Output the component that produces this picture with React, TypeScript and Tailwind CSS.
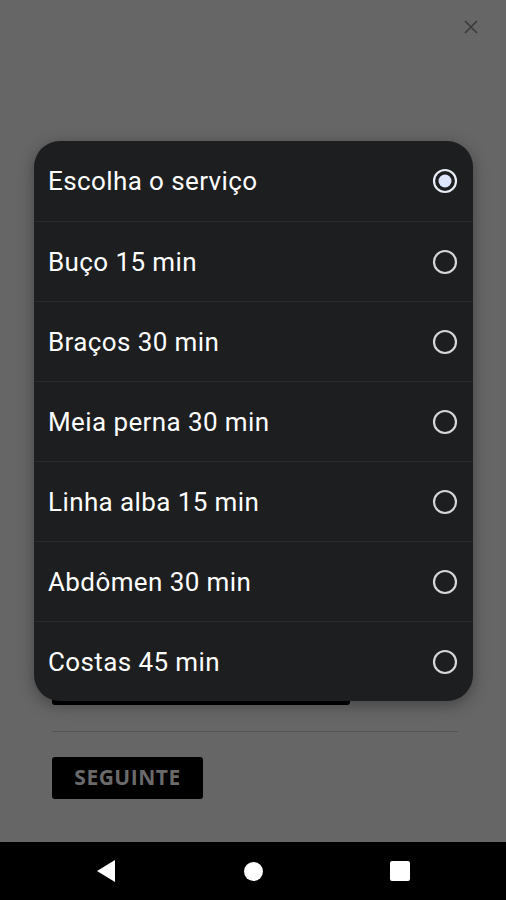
import React from "react";

const items = [
  "Escolha o serviço",
  "Buço 15 min",
  "Braços 30 min",
  "Meia perna 30 min",
  "Linha alba 15 min",
  "Abdômen 30 min",
  "Costas 45 min",
];

function Radio({ checked }: { checked: boolean }) {
  return (
    <svg width="28" height="28" viewBox="0 0 28 28">
      <circle cx="14" cy="14" r="11" fill="none" stroke={checked ? "#e8ecf5" : "#d6d6d6"} strokeWidth="2.2" />
      {checked && <circle cx="14" cy="14" r="6.5" fill="#dce5fb" />}
    </svg>
  );
}

export default function App() {
  return (
    <div className="relative w-[506px] h-[900px] overflow-hidden bg-[#666666]" style={{ fontFamily: "Roboto, 'Liberation Sans', sans-serif" }}>
      <div className="flex flex-col h-[842px]">
        <div className="flex justify-end pt-[19px] pr-[27px]">
          <svg width="16" height="16" viewBox="0 0 16 16">
            <path d="M2 2 L14 14 M14 2 L2 14" stroke="#3a3a3a" strokeWidth="1.6" />
          </svg>
        </div>
        <div className="mt-[654px] ml-[52px] w-[298px] h-[16px] bg-black rounded-b-[3px]" />
        <div className="mt-[26px] ml-[52px] mr-[48px] h-px bg-[#555555]" />
        <div className="mt-[25px] ml-[52px] w-[151px] h-[42px] bg-black rounded-[3px] flex items-center justify-center">
          <span className="text-[21px] font-bold text-[#6a6a6a] tracking-[0.5px]" style={{ fontFamily: "'Open Sans', 'Liberation Sans', sans-serif" }}>SEGUINTE</span>
        </div>
      </div>
      <div className="h-[58px] bg-black flex items-center pl-[86px] gap-[107px]">
        <div className="w-[40px] flex justify-center">
          <svg width="18" height="22" viewBox="0 0 18 22">
            <path d="M0 11 L18 0 L18 22 Z" fill="#ffffff" />
          </svg>
        </div>
        <div className="w-[40px] flex justify-center">
          <div className="w-[19px] h-[19px] rounded-full bg-white" />
        </div>
        <div className="w-[40px] flex justify-center">
          <div className="w-[20px] h-[20px] rounded-[2px] bg-white" />
        </div>
      </div>
      <div className="absolute left-[34px] top-[141px] w-[439px] rounded-[26px] bg-[#1d1e20] overflow-hidden shadow-[0_4px_16px_rgba(0,0,0,0.35)]">
        {items.map((t, i) => (
          <div key={t} className={`flex items-center justify-between h-[80px] pl-[14px] pr-[14px] ${i > 0 ? "border-t border-[#2a2b2d]" : ""}`}>
            <span className="text-[26px] text-white leading-none tracking-[0.4px]">{t}</span>
            <Radio checked={i === 0} />
          </div>
        ))}
      </div>
    </div>
  );
}
